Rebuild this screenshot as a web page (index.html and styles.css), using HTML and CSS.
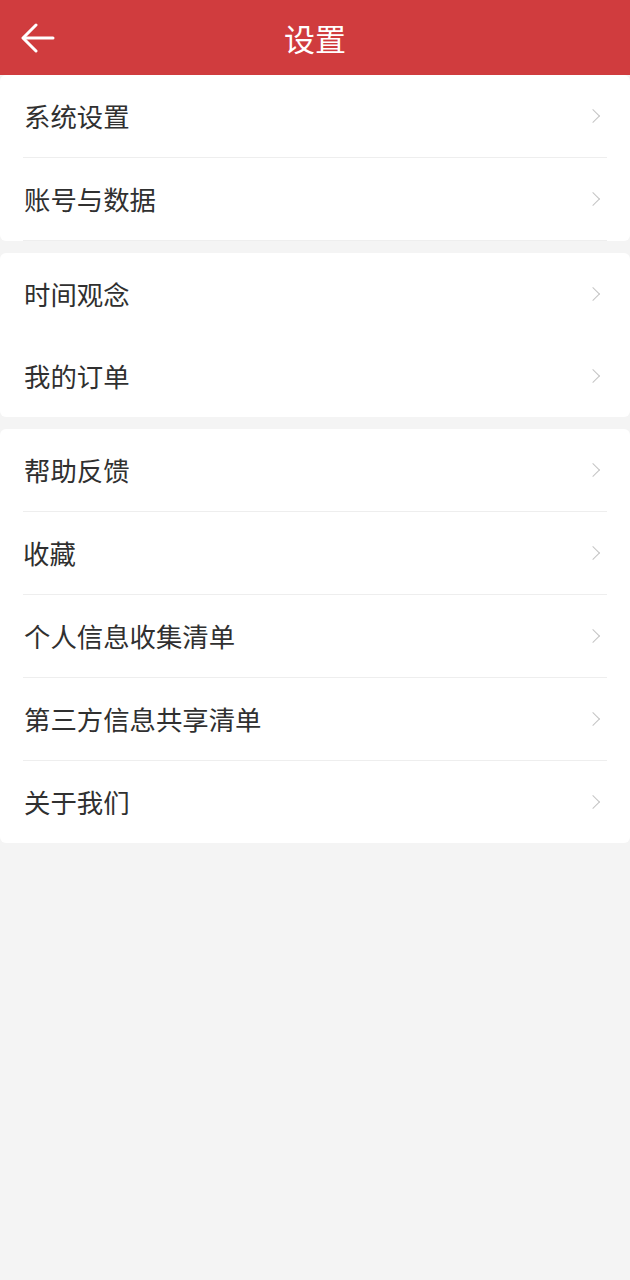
FILE: index.html
```html
<!DOCTYPE html>
<html lang="zh-CN">
<head>
<meta charset="utf-8">
<title>设置</title>
<link rel="stylesheet" href="styles.css">
</head>
<body>
<div class="page">
  <header class="topbar">
    <span class="back">
      <svg width="34" height="30" viewBox="0 0 34 30" fill="none" stroke="#fff" stroke-width="3" stroke-linecap="round" stroke-linejoin="round">
        <path d="M32 15H3"/>
        <path d="M15 2L2 15l13 13"/>
      </svg>
    </span>
    <h1 class="title">设置</h1>
  </header>

  <section class="group group-lined group-end">
    <div class="row"><span class="label">系统设置</span><span class="chev"></span></div>
    <div class="row"><span class="label">账号与数据</span><span class="chev"></span></div>
  </section>

  <section class="group">
    <div class="row"><span class="label">时间观念</span><span class="chev"></span></div>
    <div class="row"><span class="label">我的订单</span><span class="chev"></span></div>
  </section>

  <section class="group group-lined">
    <div class="row"><span class="label">帮助反馈</span><span class="chev"></span></div>
    <div class="row"><span class="label tight">收藏</span><span class="chev"></span></div>
    <div class="row"><span class="label">个人信息收集清单</span><span class="chev"></span></div>
    <div class="row"><span class="label">第三方信息共享清单</span><span class="chev"></span></div>
    <div class="row"><span class="label">关于我们</span><span class="chev"></span></div>
  </section>
</div>
</body>
</html>
```

FILE: styles.css
```css
* { box-sizing: border-box; }
html, body {
  margin: 0;
  padding: 0;
  background: #f4f4f4;
  font-family: "Noto Sans CJK SC", "Noto Sans", sans-serif;
}
.page {
  width: 630px;
  min-height: 1280px;
  display: flex;
  flex-direction: column;
}
.topbar {
  height: 75px;
  background: #d03c3e;
  display: flex;
  align-items: center;
  justify-content: center;
  position: relative;
}
.back {
  position: absolute;
  left: 21px;
  top: 23px;
  width: 34px;
  height: 30px;
  display: flex;
}
.title {
  margin: 0;
  color: #fff;
  font-size: 31px;
  font-weight: 400;
  line-height: 1;
}
.group {
  background: #fff;
  border-radius: 6px;
  margin-bottom: 12px;
  padding: 0 23px;
  display: flex;
  flex-direction: column;
}
.row {
  height: 82px;
  display: flex;
  align-items: center;
  justify-content: space-between;
}
.group-lined .row + .row {
  border-top: 1px solid #eeeeee;
  height: 83px;
}
.group-end .row:last-child {
  border-bottom: 1px solid #eeeeee;
  height: 84px;
}
.label {
  font-size: 26.4px;
  color: #303030;
  line-height: 1;
  padding-left: 1px;
}
.label.tight {
  padding-left: 0;
}
.chev {
  width: 10px;
  height: 10px;
  border-top: 1.6px solid #c4c4c4;
  border-right: 1.6px solid #c4c4c4;
  transform: rotate(45deg);
  margin-right: 9px;
}
```
